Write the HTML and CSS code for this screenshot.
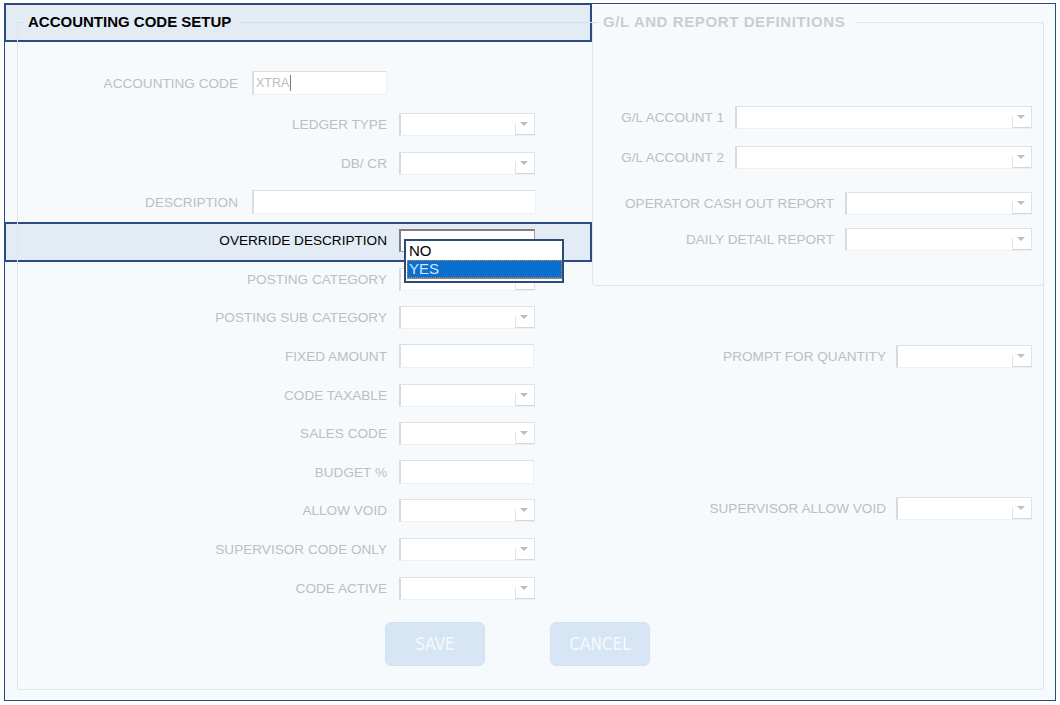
FILE: index.html
```html
<!DOCTYPE html>
<html>
<head>
<meta charset="utf-8">
<link rel="stylesheet" href="styles.css">
</head>
<body>
<div class="frame">
  <div class="mark mark-top"></div>
  <div class="mark mark-row"></div>
  <fieldset class="setup">
    <legend class="legend-main">ACCOUNTING CODE SETUP</legend>
    <div class="cols">
      <div class="left">
        <div class="row wide first"><span class="lbl">ACCOUNTING CODE</span><div class="txt"><span class="val">XTRA</span><i class="caret"></i></div></div>
        <div class="row"><span class="lbl">LEDGER TYPE</span><div class="sel"></div></div>
        <div class="row"><span class="lbl">DB/ CR</span><div class="sel"></div></div>
        <div class="row wide"><span class="lbl">DESCRIPTION</span><div class="txt long"></div></div>
        <div class="row active"><span class="lbl">OVERRIDE DESCRIPTION</span>
          <div class="sel focus">
            <div class="dropdown">
              <div class="list">
                <div class="opt">NO</div>
                <div class="opt on">YES</div>
              </div>
            </div>
          </div>
        </div>
        <div class="row"><span class="lbl">POSTING CATEGORY</span><div class="sel"></div></div>
        <div class="row"><span class="lbl">POSTING SUB CATEGORY</span><div class="sel"></div></div>
        <div class="row"><span class="lbl">FIXED AMOUNT</span><div class="txt"></div></div>
        <div class="row"><span class="lbl">CODE TAXABLE</span><div class="sel"></div></div>
        <div class="row"><span class="lbl">SALES CODE</span><div class="sel"></div></div>
        <div class="row"><span class="lbl">BUDGET %</span><div class="txt"></div></div>
        <div class="row"><span class="lbl">ALLOW VOID</span><div class="sel"></div></div>
        <div class="row"><span class="lbl">SUPERVISOR CODE ONLY</span><div class="sel"></div></div>
        <div class="row"><span class="lbl">CODE ACTIVE</span><div class="sel"></div></div>
        <div class="buttons">
          <button class="btn">SAVE</button>
          <button class="btn">CANCEL</button>
        </div>
      </div>
      <div class="right">
        <fieldset class="gl">
          <legend class="legend-gl">G/L AND REPORT DEFINITIONS</legend>
          <div class="rrow r1"><span class="lbl">G/L ACCOUNT 1</span><div class="sel w297"></div></div>
          <div class="rrow r2"><span class="lbl">G/L ACCOUNT 2</span><div class="sel w297"></div></div>
          <div class="rrow r3"><span class="lbl">OPERATOR CASH OUT REPORT</span><div class="sel w187"></div></div>
          <div class="rrow r4"><span class="lbl">DAILY DETAIL REPORT</span><div class="sel w187"></div></div>
        </fieldset>
        <div class="rrow outer prompt"><span class="lbl">PROMPT FOR QUANTITY</span><div class="sel"></div></div>
        <div class="rrow outer supvoid"><span class="lbl">SUPERVISOR ALLOW VOID</span><div class="sel"></div></div>
      </div>
    </div>
  </fieldset>
</div>
</body>
</html>
```
FILE: styles.css
```css
body {
  margin: 0;
  background: #ffffff;
  font-family: "Liberation Sans", Arial, sans-serif;
}

.frame {
  position: relative;
  margin: 3px 0 0 4px;
  width: 1050px;
  height: 696px;
  border: 1px solid #2b4a7d;
  background: #f6fafd;
}

.mark {
  position: absolute;
  z-index: 0;
  left: -1px;
  width: 588px;
  box-sizing: border-box;
  border: 2px solid #2b4a7d;
  background: #e3ebf5;
}
.mark-top { top: -1px; height: 39px; }
.mark-row { top: 218px; height: 40px; }

.setup {
  position: relative;
  z-index: 1;
  margin: 10px 0 0 12px;
  padding: 0;
  width: 1027px;
  height: 676px;
  box-sizing: border-box;
  border: 1px solid #dde5ee;
  border-top-color: #cfdcea;
  border-radius: 3px;
  min-width: 0;
}

.legend-main {
  margin-left: 6px;
  padding: 0 8px 0 4px;
  font-weight: bold;
  font-size: 15px;
  line-height: 16px;
  color: #000;
}

.cols {
  display: flex;
  align-items: flex-start;
}

.left {
  flex: none;
  width: 574px;
  padding-top: 34px;
  box-sizing: border-box;
}

.row {
  display: flex;
  align-items: center;
  height: 38.6px;
}
.row.first {
  height: 38px;
  margin-bottom: 3.6px;
}

.lbl {
  font-size: 13.6px;
  color: #bebebe;
  white-space: nowrap;
}
.row .lbl {
  flex: none;
  width: 369px;
  margin-right: 12px;
  text-align: right;
}
.row.wide .lbl {
  width: 220px;
  margin-right: 14px;
}
.row.active .lbl {
  color: #000;
}

.sel {
  position: relative;
  flex: none;
  width: 136px;
  height: 23px;
  box-sizing: border-box;
  background: #fff;
  border: 1px solid #e2e2e2;
  border-left: 2px solid #d9d9d9;
  border-bottom-color: #efefef;
}
.sel::before {
  content: "";
  position: absolute;
  right: 0;
  bottom: 0;
  width: 18px;
  height: 11px;
  border-left: 1px solid #e4e4e4;
  border-bottom: 1px solid #d6d6d6;
}
.sel::after {
  content: "";
  position: absolute;
  right: 6px;
  top: 8px;
  border-left: 4px solid transparent;
  border-right: 4px solid transparent;
  border-top: 4px solid #bdbdbd;
}
.sel.w297 { width: 297px; }
.sel.w187 { width: 187px; }

.sel.focus {
  border: 1px solid #a0a0a0;
  border-top: 2px solid #808080;
  border-left: 2px solid #808080;
}

.txt {
  position: relative;
  flex: none;
  display: flex;
  align-items: center;
  width: 135px;
  height: 24px;
  box-sizing: border-box;
  padding-left: 2px;
  background: #fff;
  border: 1px solid #efefef;
  border-top-color: #dedede;
  border-left: 2px solid #dedede;
}
.txt.long { width: 284px; }
.val {
  font-size: 12.5px;
  color: #bcbcbc;
}
.caret {
  display: block;
  width: 1px;
  height: 16px;
  margin-left: 1px;
  background: #7a7a7a;
}

.dropdown {
  position: absolute;
  z-index: 3;
  left: 3px;
  top: 8px;
  width: 160px;
  height: 44px;
  box-sizing: border-box;
  border: 2px solid #2b4a7d;
  padding: 1px 0 1px 1px;
  background: #fff;
}
.list {
  border-bottom: 1px solid #8a8a8a;
}
.opt {
  height: 18px;
  line-height: 18px;
  padding-left: 2px;
  font-size: 15px;
  color: #000;
  box-sizing: border-box;
}
.opt.on {
  background: #0b6fd1;
  color: #d3e6fb;
  outline: 1px dotted #d0893a;
  outline-offset: -1px;
}

.buttons {
  display: flex;
  gap: 65px;
  padding-left: 367px;
  margin-top: 15px;
}
.btn {
  flex: none;
  width: 100px;
  height: 44px;
  padding: 0;
  border: 1px solid #d2e2f0;
  border-radius: 6px;
  background: #d6e6f4;
  color: #f6f9fd;
  font-family: "Liberation Sans Narrow", "DejaVu Sans Condensed", "Liberation Sans", sans-serif;
  font-size: 17px;
}

.right {
  flex: none;
  width: 452px;
  margin-right: -1px;
}

.gl {
  margin: -16px 0 0 0;
  padding: 75px 11px 0 0;
  height: 272px;
  box-sizing: border-box;
  border: 1px solid #dde5ee;
  border-radius: 3px;
  min-width: 0;
}
.legend-gl {
  margin-left: 6px;
  padding: 0 10px 0 4px;
  background: #f6fafd;
  font-weight: bold;
  font-size: 15px;
  letter-spacing: 0.6px;
  line-height: 16px;
  color: #c9cdd1;
}

.rrow {
  display: flex;
  justify-content: flex-end;
  align-items: center;
  gap: 11px;
  height: 24px;
}
.r2 { margin-top: 16px; }
.r3 { margin-top: 22px; }
.r4 { margin-top: 12px; }

.rrow.outer {
  padding-right: 12px;
  gap: 10px;
}
.prompt { margin-top: 58px; }
.supvoid { margin-top: 128px; }
```
